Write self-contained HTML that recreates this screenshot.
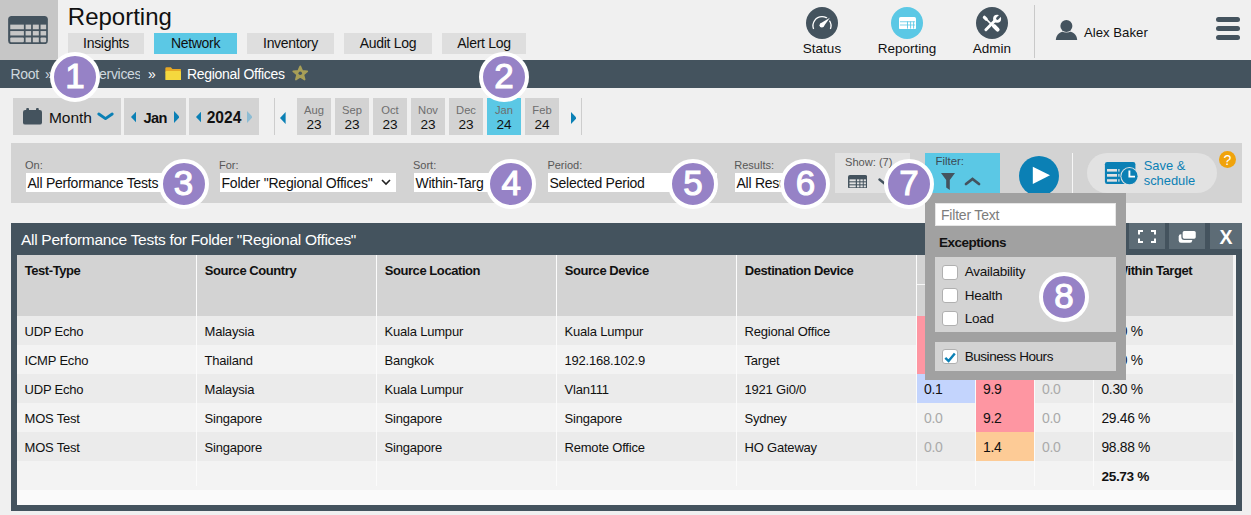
<!DOCTYPE html>
<html><head><meta charset="utf-8"><style>
*{margin:0;padding:0;box-sizing:border-box}
html,body{width:1251px;height:515px;overflow:hidden;background:#f0f0f0;position:relative;font-family:"Liberation Sans",sans-serif}
body>div,body>svg{position:absolute}
.t{white-space:nowrap;line-height:1}
.c{text-align:center}
.badge{width:50px;height:50px;border-radius:50%;background:#9682c6;border:4px solid #fff;color:#fff;font-weight:normal;-webkit-text-stroke:1.1px #fff;font-size:35px;text-align:center;line-height:40.5px}
</style></head><body>
<div style="left:0px;top:0px;width:58px;height:60px;background:#c6c6c6;"></div>
<svg style="left:8.3px;top:15.8px" width="40" height="28.2" viewBox="0 0 39.6 28.1">
<rect x="0" y="0" width="39.6" height="28.1" rx="3.5" fill="#44535e"/>
<g fill="#c6c6c6">
<rect x="2.1" y="8.6" width="13.6" height="4.6"/><rect x="2.1" y="15" width="13.6" height="4.4"/><rect x="2.1" y="21.4" width="13.6" height="4.8" rx="1"/>
<rect x="17.4" y="8.6" width="5.5" height="4.6"/><rect x="24.6" y="8.6" width="6" height="4.6"/><rect x="32.3" y="8.6" width="5.6" height="4.6"/>
<rect x="17.4" y="15" width="5.5" height="4.4"/><rect x="24.6" y="15" width="6" height="4.4"/><rect x="32.3" y="15" width="5.6" height="4.4"/>
<rect x="17.4" y="21.4" width="5.5" height="4.8"/><rect x="24.6" y="21.4" width="6" height="4.8"/><rect x="32.3" y="21.4" width="5.6" height="4.8" rx="1"/>
</g></svg>
<div class="t" style="left:67.8px;top:4.98px;font-size:24px;color:#111;font-weight:normal;">Reporting</div>
<div style="left:68px;top:33px;width:76px;height:21px;background:#dedede;"></div>
<div class="t c" style="left:68px;width:76px;top:36.15px;font-size:14px;letter-spacing:-0.3px;color:#111">Insights</div>
<div style="left:154px;top:33px;width:83px;height:21px;background:#5bc8e5;"></div>
<div class="t c" style="left:154px;width:83px;top:36.15px;font-size:14px;letter-spacing:-0.3px;color:#111">Network</div>
<div style="left:247px;top:33px;width:87px;height:21px;background:#dedede;"></div>
<div class="t c" style="left:247px;width:87px;top:36.15px;font-size:14px;letter-spacing:-0.3px;color:#111">Inventory</div>
<div style="left:344px;top:33px;width:88px;height:21px;background:#dedede;"></div>
<div class="t c" style="left:344px;width:88px;top:36.15px;font-size:14px;letter-spacing:-0.3px;color:#111">Audit Log</div>
<div style="left:442px;top:33px;width:84px;height:21px;background:#dedede;"></div>
<div class="t c" style="left:442px;width:84px;top:36.15px;font-size:14px;letter-spacing:-0.3px;color:#111">Alert Log</div>
<div style="left:806px;top:6.800000000000001px;width:32px;height:32px;border-radius:50%;background:#44535e;"></div>
<svg style="left:806px;top:6.8px" width="32" height="32" viewBox="0 0 32 32">
<path d="M7.6 21.9 A9 9 0 1 1 24.4 21.9" fill="none" stroke="#fff" stroke-width="1.3"/>
<path d="M16 18 L24.6 10.1" stroke="#44535e" stroke-width="3.6"/>
<path d="M14.3 16.6 L23.9 10.8 L17.4 19.8 Z" fill="#fff"/><circle cx="15.8" cy="18.2" r="2.3" fill="#fff"/>
</svg>
<div style="left:891px;top:6.800000000000001px;width:32px;height:32px;border-radius:50%;background:#5bc8e5;"></div>
<svg style="left:898.5px;top:16.7px" width="17" height="12.4" viewBox="0 0 17 12.4">
<rect x="0" y="0" width="17" height="12.4" rx="1.6" fill="#fff"/>
<g fill="#5bc8e5"><rect x="0.9" y="4.4" width="15.2" height="0.8"/><rect x="0.9" y="7.6" width="15.2" height="0.8"/>
<rect x="8" y="4.4" width="0.9" height="7.2"/><rect x="11.2" y="4.4" width="0.9" height="7.2"/><rect x="14.2" y="4.4" width="0.9" height="7.2"/></g>
</svg>
<div style="left:976px;top:6.800000000000001px;width:32px;height:32px;border-radius:50%;background:#44535e;"></div>
<svg style="left:976px;top:6.8px" width="32" height="32" viewBox="0 0 32 32">
<g stroke="#fff" stroke-linecap="round" fill="none">
<path d="M8.4 10.3 L10.2 12.1" stroke-width="3.2"/>
<path d="M9.5 11.4 L17.5 19.4" stroke-width="1.6"/>
<path d="M18 19 L21.6 22.6" stroke-width="4"/>
<path d="M9.9 22.7 L18.8 13.8" stroke-width="3"/>
</g>
<circle cx="21.1" cy="11.8" r="4" fill="#fff"/>
<path d="M21.4 11.5 L25.2 7.7" stroke="#44535e" stroke-width="2.6" stroke-linecap="round"/>
</svg>
<div class="t c" style="left:772px;width:100px;top:42.17px;font-size:13.5px;color:#111">Status</div>
<div class="t c" style="left:857px;width:100px;top:42.17px;font-size:13.5px;color:#111">Reporting</div>
<div class="t c" style="left:942px;width:100px;top:42.17px;font-size:13.5px;color:#111">Admin</div>
<div style="left:1034px;top:5px;width:1px;height:53px;background:#c9c9c9;"></div>
<svg style="left:1055px;top:19px" width="23" height="22" viewBox="0 0 23 22">
<path d="M0.8 21 C1.2 15.5 5 12.3 11.5 12.3 C18 12.3 21.8 15.5 22.2 21 Z" fill="#44535e"/>
<circle cx="11.4" cy="7" r="6.6" fill="#efefef"/>
<circle cx="11.4" cy="7" r="6" fill="#44535e"/>
</svg>
<div class="t" style="left:1084px;top:26.02px;font-size:13.2px;color:#111;font-weight:normal;">Alex Baker</div>
<div style="left:1216px;top:17px;width:24px;height:5.300000000000001px;background:#44535e;border-radius:3px"></div>
<div style="left:1216px;top:26px;width:24px;height:5.300000000000001px;background:#44535e;border-radius:3px"></div>
<div style="left:1216px;top:35px;width:24px;height:5.299999999999997px;background:#44535e;border-radius:3px"></div>
<div style="left:0px;top:60px;width:1251px;height:28px;background:#44535e;"></div>
<div class="t" style="left:10.5px;top:66.95px;font-size:14px;color:#cfd8de;font-weight:normal;letter-spacing:-0.3px;">Root</div>
<div class="t" style="left:45px;top:66.95px;font-size:14px;color:#cfd8de;font-weight:normal;">&raquo;</div>
<div class="t" style="left:90px;top:66.95px;font-size:14px;color:#cfd8de;font-weight:normal;letter-spacing:-0.3px;width:50px;text-align:right;overflow:hidden">Services</div>
<div class="t" style="left:148px;top:66.95px;font-size:14px;color:#fff;font-weight:normal;">&raquo;</div>
<svg style="left:164.7px;top:66.5px" width="16.6" height="13.6" viewBox="0 0 17 14">
<path d="M0.3 1.6 Q0.3 0.3 1.6 0.3 L6 0.3 L7.6 2 L15.4 2 Q16.7 2 16.7 3.3 L16.7 5 L0.3 5 Z" fill="#e6a825"/>
<rect x="0.3" y="4.2" width="16.4" height="9.5" rx="1.2" fill="#f5d83e"/>
</svg>
<div class="t" style="left:187px;top:66.95px;font-size:14px;color:#fff;font-weight:normal;letter-spacing:-0.3px;">Regional Offices</div>
<svg style="left:292px;top:65.2px" width="16.5" height="15.6" viewBox="0 0 24 23">
<path d="M12 2 L14.9 8.8 L22.3 9.4 L16.6 14.2 L18.4 21.4 L12 17.5 L5.6 21.4 L7.4 14.2 L1.7 9.4 L9.1 8.8 Z" fill="#a89f57" stroke="#a89f57" stroke-width="2.6" stroke-linejoin="round"/>
<circle cx="12" cy="12.3" r="2.6" fill="#44535e"/>
</svg>
<div style="left:13px;top:98px;width:108px;height:37px;background:#d3d3d3;"></div>
<svg style="left:23px;top:108px" width="19" height="17" viewBox="0 0 19 17">
<rect x="0" y="2" width="19" height="14.6" rx="2.2" fill="#44535e"/>
<rect x="3.2" y="0" width="2.8" height="4" rx="1" fill="#44535e"/><rect x="13" y="0" width="2.8" height="4" rx="1" fill="#44535e"/>
</svg>
<div class="t" style="left:48.9px;top:109.68px;font-size:15.5px;color:#111;font-weight:normal;">Month</div>
<svg style="left:97px;top:112px" width="17" height="9" viewBox="0 0 17 9"><path d="M1.8 2 L8.5 6.6 L15.2 2" fill="none" stroke="#0b80b5" stroke-width="2.9" stroke-linecap="round" stroke-linejoin="round"/></svg>
<div style="left:124px;top:98px;width:62px;height:37px;background:#d3d3d3;"></div>
<div style="left:189px;top:98px;width:70px;height:37px;background:#d3d3d3;"></div>
<svg style="left:130.8px;top:111px" width="5.6" height="12" viewBox="0 0 5.6 12"><path d="M5.6 0 L0 6.0 L5.6 12 Z" fill="#0b80b5"/></svg>
<div class="t" style="left:143.5px;top:110.84px;font-size:14.6px;color:#111;font-weight:bold;letter-spacing:-0.6px;">Jan</div>
<svg style="left:173.7px;top:111px" width="5.6" height="12" viewBox="0 0 5.6 12"><path d="M0 0 L5.6 6.0 L0 12 Z" fill="#0b80b5"/></svg>
<svg style="left:195.8px;top:111px" width="5.6" height="12" viewBox="0 0 5.6 12"><path d="M5.6 0 L0 6.0 L5.6 12 Z" fill="#0b80b5"/></svg>
<div class="t" style="left:206.7px;top:109.99px;font-size:15.6px;color:#111;font-weight:bold;">2024</div>
<svg style="left:246.8px;top:111px" width="5.6" height="12" viewBox="0 0 5.6 12"><path d="M0 0 L5.6 6.0 L0 12 Z" fill="#8dbcd3"/></svg>
<div style="left:274px;top:98px;width:1px;height:37px;background:#cdcdcd;"></div>
<svg style="left:280px;top:111.5px" width="5.6" height="12" viewBox="0 0 5.6 12"><path d="M5.6 0 L0 6.0 L5.6 12 Z" fill="#0b80b5"/></svg>
<div style="left:297px;top:98px;width:34px;height:37px;background:#d3d3d3;"></div>
<div class="t c" style="left:297px;width:34px;top:105.32px;font-size:11.2px;color:#6e6e6e">Aug</div>
<div class="t c" style="left:297px;width:34px;top:117.68px;font-size:13.6px;color:#111">23</div>
<div style="left:335px;top:98px;width:34px;height:37px;background:#d3d3d3;"></div>
<div class="t c" style="left:335px;width:34px;top:105.32px;font-size:11.2px;color:#6e6e6e">Sep</div>
<div class="t c" style="left:335px;width:34px;top:117.68px;font-size:13.6px;color:#111">23</div>
<div style="left:373px;top:98px;width:34px;height:37px;background:#d3d3d3;"></div>
<div class="t c" style="left:373px;width:34px;top:105.32px;font-size:11.2px;color:#6e6e6e">Oct</div>
<div class="t c" style="left:373px;width:34px;top:117.68px;font-size:13.6px;color:#111">23</div>
<div style="left:411px;top:98px;width:34px;height:37px;background:#d3d3d3;"></div>
<div class="t c" style="left:411px;width:34px;top:105.32px;font-size:11.2px;color:#6e6e6e">Nov</div>
<div class="t c" style="left:411px;width:34px;top:117.68px;font-size:13.6px;color:#111">23</div>
<div style="left:449px;top:98px;width:34px;height:37px;background:#d3d3d3;"></div>
<div class="t c" style="left:449px;width:34px;top:105.32px;font-size:11.2px;color:#6e6e6e">Dec</div>
<div class="t c" style="left:449px;width:34px;top:117.68px;font-size:13.6px;color:#111">23</div>
<div style="left:487px;top:98px;width:34px;height:37px;background:#5bc8e5;"></div>
<div class="t c" style="left:487px;width:34px;top:105.32px;font-size:11.2px;color:#6e6e6e">Jan</div>
<div class="t c" style="left:487px;width:34px;top:117.68px;font-size:13.6px;color:#111">24</div>
<div style="left:525px;top:98px;width:34px;height:37px;background:#d3d3d3;"></div>
<div class="t c" style="left:525px;width:34px;top:105.32px;font-size:11.2px;color:#6e6e6e">Feb</div>
<div class="t c" style="left:525px;width:34px;top:117.68px;font-size:13.6px;color:#111">24</div>
<svg style="left:570.6px;top:112px" width="5.6" height="12" viewBox="0 0 5.6 12"><path d="M0 0 L5.6 6.0 L0 12 Z" fill="#0b80b5"/></svg>
<div style="left:581px;top:98px;width:1px;height:37px;background:#cdcdcd;"></div>
<div style="left:11px;top:143px;width:1231px;height:60px;background:#d3d3d3;"></div>
<div class="t" style="left:25px;top:159.69px;font-size:11px;color:#575757;font-weight:normal;">On:</div>
<div class="t" style="left:219px;top:159.69px;font-size:11px;color:#575757;font-weight:normal;">For:</div>
<div class="t" style="left:413px;top:159.69px;font-size:11px;color:#575757;font-weight:normal;">Sort:</div>
<div class="t" style="left:547.4px;top:159.69px;font-size:11px;color:#575757;font-weight:normal;">Period:</div>
<div class="t" style="left:734.3px;top:159.69px;font-size:11px;color:#575757;font-weight:normal;">Results:</div>
<div style="left:26px;top:173px;width:174px;height:19px;background:#fff;"></div>
<div class="t" style="left:27.5px;top:176.15px;font-size:14px;color:#111;font-weight:normal;letter-spacing:-0.25px;">All Performance Tests</div>
<div style="left:220px;top:173px;width:176px;height:19px;background:#fff;"></div>
<div class="t" style="left:221.5px;top:176.15px;font-size:14px;color:#111;font-weight:normal;letter-spacing:-0.2px;">Folder "Regional Offices"</div>
<svg style="left:381px;top:179px" width="10" height="7" viewBox="0 0 10 7"><path d="M1 1 L5 5 L9 1" fill="none" stroke="#222" stroke-width="1.6"/></svg>
<div style="left:414px;top:173px;width:86px;height:19px;background:#fff;"></div>
<div class="t" style="left:415.5px;top:176.15px;font-size:14px;color:#111;font-weight:normal;letter-spacing:-0.25px;">Within-Targ</div>
<div style="left:548px;top:173px;width:169px;height:19px;background:#fff;"></div>
<div class="t" style="left:549.5px;top:176.15px;font-size:14px;color:#111;font-weight:normal;letter-spacing:-0.25px;">Selected Period</div>
<div style="left:735px;top:173px;width:65px;height:19px;background:#fff;"></div>
<div class="t" style="left:736.5px;top:176.15px;font-size:14px;color:#111;font-weight:normal;letter-spacing:-0.25px;">All Resu</div>
<div style="left:835px;top:153px;width:75px;height:40px;background:#e2e2e2;"></div>
<div class="t" style="left:845px;top:156.60px;font-size:11.1px;color:#575757;font-weight:normal;">Show: (7)</div>
<svg style="left:848px;top:174.6px" width="19.2" height="13.6" viewBox="0 0 39.6 28.1">
<rect x="0" y="0" width="39.6" height="28.1" rx="4" fill="#44535e"/>
<g fill="#e2e2e2">
<rect x="3" y="9" width="13" height="4"/><rect x="3" y="15.2" width="13" height="4"/><rect x="3" y="21.4" width="13" height="4"/>
<rect x="18.5" y="9" width="5" height="4"/><rect x="25.5" y="9" width="5" height="4"/><rect x="32.5" y="9" width="4.5" height="4"/>
<rect x="18.5" y="15.2" width="5" height="4"/><rect x="25.5" y="15.2" width="5" height="4"/><rect x="32.5" y="15.2" width="4.5" height="4"/>
<rect x="18.5" y="21.4" width="5" height="4"/><rect x="25.5" y="21.4" width="5" height="4"/><rect x="32.5" y="21.4" width="4.5" height="4"/>
</g></svg>
<svg style="left:878px;top:178px" width="14" height="8" viewBox="0 0 14 8"><path d="M1.5 1.5 L7 6 L12.5 1.5" fill="none" stroke="#44535e" stroke-width="2.4" stroke-linecap="round"/></svg>
<div style="left:925px;top:153px;width:75px;height:40px;background:#5bc8e5;"></div>
<div class="t" style="left:935.5px;top:156.35px;font-size:11.4px;color:#3b4a55;font-weight:normal;">Filter:</div>
<svg style="left:941px;top:173px" width="14" height="17" viewBox="0 0 14 17">
<path d="M0 0 L14 0 L8.8 7 L8.8 17 L5.2 14.5 L5.2 7 Z" fill="#44535e"/></svg>
<svg style="left:964px;top:177px" width="17" height="9" viewBox="0 0 17 9"><path d="M2 7 L8.5 2 L15 7" fill="none" stroke="#44535e" stroke-width="2.8" stroke-linecap="round"/></svg>
<div style="left:1019px;top:156px;width:40px;height:40px;border-radius:50%;background:#0b80b5;"></div>
<svg style="left:1029px;top:164px" width="22" height="24" viewBox="0 0 22 24"><path d="M3.8 2.7 L21 11.3 L3.8 20 Z" fill="#fff"/></svg>
<div style="left:1072px;top:153px;width:1.2999999999999545px;height:40px;background:#f6f6f6;"></div>
<div style="left:1087px;top:153px;width:130px;height:40px;background:#e2e2e2;border-radius:20px"></div>
<svg style="left:1104px;top:162px" width="34" height="24" viewBox="0 0 34 24">
<rect x="0.9" y="0" width="30.5" height="22" rx="2.2" fill="#0b80b5"/>
<g fill="#e2e2e2"><rect x="3" y="7" width="10" height="2.6"/><rect x="3" y="12" width="10" height="2.7"/><rect x="3" y="17.2" width="10" height="2.5"/>
<rect x="14.3" y="7" width="1.2" height="2.6"/><rect x="14.3" y="12" width="1.2" height="2.7"/><rect x="14.3" y="17.2" width="1.2" height="2.5"/></g>
<circle cx="25.5" cy="14.2" r="9.1" fill="#e2e2e2"/><circle cx="25.5" cy="14.2" r="8.1" fill="#0b80b5"/>
<path d="M25.4 8.6 L25.4 14.6 L31 14.6" fill="none" stroke="#fff" stroke-width="1.9"/>
</svg>
<div class="t" style="left:1143.7px;top:159.58px;font-size:12.9px;color:#0b80b5;font-weight:normal;">Save &amp;</div>
<div class="t" style="left:1143.7px;top:174.58px;font-size:12.9px;color:#0b80b5;font-weight:normal;">schedule</div>
<div style="left:1219.0px;top:150.9px;width:17.0px;height:17.0px;border-radius:50%;background:#f0a30c;"></div>
<div class="t c" style="left:1219px;width:17px;top:152.65px;font-size:14px;color:#fff">?</div>
<div style="left:11px;top:223px;width:1231px;height:288px;background:#44535e;"></div>
<div class="t" style="left:21px;top:231.88px;font-size:15.5px;color:#fff;font-weight:normal;letter-spacing:-0.29px;">All Performance Tests for Folder "Regional Offices"</div>
<div style="left:1129px;top:223px;width:36px;height:26px;background:#5d6c76;"></div>
<div style="left:1169px;top:223px;width:36px;height:26px;background:#5d6c76;"></div>
<div style="left:1210px;top:223px;width:32px;height:26px;background:#5d6c76;"></div>
<svg style="left:1138px;top:230px" width="18" height="13" viewBox="0 0 18 13"><path d="M1 4.5 L1 1 L5 1 M13 1 L17 1 L17 4.5 M17 8.5 L17 12 L13 12 M5 12 L1 12 L1 8.5" fill="none" stroke="#fff" stroke-width="2"/></svg>
<svg style="left:1178px;top:229.5px" width="19" height="13" viewBox="0 0 19 13"><rect x="0.7" y="4.2" width="13.5" height="8.6" rx="2.2" fill="#fff"/><rect x="4" y="0.3" width="14.4" height="9" rx="2.2" fill="#fff" stroke="#5d6c76" stroke-width="1.3"/></svg>
<div class="t c" style="left:1210px;width:32px;top:228.49px;font-size:19.5px;font-weight:bold;color:#fff">X</div>
<div style="left:17px;top:255px;width:1219px;height:250px;background:#fafafa;"></div>
<div style="left:17px;top:255px;width:1216px;height:61px;background:#d3d3d3;"></div>
<div style="left:1233px;top:255px;width:3px;height:61px;background:#f4f4f4;"></div>
<div style="left:17px;top:316px;width:1216px;height:29px;background:#ebebeb;"></div>
<div style="left:1233px;top:316px;width:3px;height:29px;background:#f4f4f4;"></div>
<div style="left:17px;top:345px;width:1216px;height:29px;background:#f3f3f3;"></div>
<div style="left:1233px;top:345px;width:3px;height:29px;background:#f4f4f4;"></div>
<div style="left:17px;top:374px;width:1216px;height:29px;background:#ebebeb;"></div>
<div style="left:1233px;top:374px;width:3px;height:29px;background:#f4f4f4;"></div>
<div style="left:17px;top:403px;width:1216px;height:29px;background:#f3f3f3;"></div>
<div style="left:1233px;top:403px;width:3px;height:29px;background:#f4f4f4;"></div>
<div style="left:17px;top:432px;width:1216px;height:29px;background:#ebebeb;"></div>
<div style="left:1233px;top:432px;width:3px;height:29px;background:#f4f4f4;"></div>
<div style="left:17px;top:461px;width:1216px;height:29px;background:#f3f3f3;"></div>
<div style="left:1233px;top:461px;width:3px;height:29px;background:#f4f4f4;"></div>
<div style="left:196px;top:255px;width:1px;height:231px;background:#fbfbfb;"></div>
<div style="left:376px;top:255px;width:1px;height:231px;background:#fbfbfb;"></div>
<div style="left:556px;top:255px;width:1px;height:231px;background:#fbfbfb;"></div>
<div style="left:736px;top:255px;width:1px;height:231px;background:#fbfbfb;"></div>
<div style="left:916px;top:255px;width:1px;height:231px;background:#fbfbfb;"></div>
<div style="left:975px;top:255px;width:1px;height:231px;background:#fbfbfb;"></div>
<div style="left:1034px;top:255px;width:1px;height:231px;background:#fbfbfb;"></div>
<div style="left:1093px;top:255px;width:1px;height:231px;background:#fbfbfb;"></div>
<div class="t" style="left:24.7px;top:263.99px;font-size:13px;color:#111;font-weight:bold;letter-spacing:-0.43px;">Test-Type</div>
<div class="t" style="left:204.7px;top:263.99px;font-size:13px;color:#111;font-weight:bold;letter-spacing:-0.43px;">Source Country</div>
<div class="t" style="left:384.7px;top:263.99px;font-size:13px;color:#111;font-weight:bold;letter-spacing:-0.43px;">Source Location</div>
<div class="t" style="left:564.7px;top:263.99px;font-size:13px;color:#111;font-weight:bold;letter-spacing:-0.43px;">Source Device</div>
<div class="t" style="left:744.7px;top:263.99px;font-size:13px;color:#111;font-weight:bold;letter-spacing:-0.43px;">Destination Device</div>
<div class="t" style="left:1101.5px;top:263.99px;font-size:13px;color:#111;font-weight:bold;letter-spacing:-0.43px;">% Within Target</div>
<div style="left:917px;top:284px;width:177px;height:1px;background:#f6f6f6;"></div>
<div class="t" style="left:24.5px;top:325.19px;font-size:13px;color:#111;font-weight:normal;letter-spacing:-0.2px;">UDP Echo</div>
<div class="t" style="left:204.5px;top:325.19px;font-size:13px;color:#111;font-weight:normal;letter-spacing:-0.2px;">Malaysia</div>
<div class="t" style="left:384.5px;top:325.19px;font-size:13px;color:#111;font-weight:normal;letter-spacing:-0.2px;">Kuala Lumpur</div>
<div class="t" style="left:564.5px;top:325.19px;font-size:13px;color:#111;font-weight:normal;letter-spacing:-0.2px;">Kuala Lumpur</div>
<div class="t" style="left:744.5px;top:325.19px;font-size:13px;color:#111;font-weight:normal;letter-spacing:-0.2px;">Regional Office</div>
<div style="left:917px;top:316px;width:58px;height:29px;background:#fe96a2;"></div>
<div style="left:976px;top:316px;width:58px;height:29px;background:#fe96a2;"></div>
<div class="t" style="left:1101.5px;top:324.52px;font-size:13.8px;color:#111;font-weight:normal;letter-spacing:-0.3px;">0.00 %</div>
<div class="t" style="left:24.5px;top:354.19px;font-size:13px;color:#111;font-weight:normal;letter-spacing:-0.2px;">ICMP Echo</div>
<div class="t" style="left:204.5px;top:354.19px;font-size:13px;color:#111;font-weight:normal;letter-spacing:-0.2px;">Thailand</div>
<div class="t" style="left:384.5px;top:354.19px;font-size:13px;color:#111;font-weight:normal;letter-spacing:-0.2px;">Bangkok</div>
<div class="t" style="left:564.5px;top:354.19px;font-size:13px;color:#111;font-weight:normal;letter-spacing:-0.2px;">192.168.102.9</div>
<div class="t" style="left:744.5px;top:354.19px;font-size:13px;color:#111;font-weight:normal;letter-spacing:-0.2px;">Target</div>
<div style="left:917px;top:345px;width:58px;height:29px;background:#fe96a2;"></div>
<div style="left:976px;top:345px;width:58px;height:29px;background:#fe96a2;"></div>
<div class="t" style="left:1101.5px;top:353.52px;font-size:13.8px;color:#111;font-weight:normal;letter-spacing:-0.3px;">0.00 %</div>
<div class="t" style="left:24.5px;top:383.19px;font-size:13px;color:#111;font-weight:normal;letter-spacing:-0.2px;">UDP Echo</div>
<div class="t" style="left:204.5px;top:383.19px;font-size:13px;color:#111;font-weight:normal;letter-spacing:-0.2px;">Malaysia</div>
<div class="t" style="left:384.5px;top:383.19px;font-size:13px;color:#111;font-weight:normal;letter-spacing:-0.2px;">Kuala Lumpur</div>
<div class="t" style="left:564.5px;top:383.19px;font-size:13px;color:#111;font-weight:normal;letter-spacing:-0.2px;">Vlan111</div>
<div class="t" style="left:744.5px;top:383.19px;font-size:13px;color:#111;font-weight:normal;letter-spacing:-0.2px;">1921 Gi0/0</div>
<div style="left:917px;top:374px;width:58px;height:29px;background:#c3d4fd;"></div>
<div class="t" style="left:924px;top:382.35px;font-size:14px;color:#111;font-weight:normal;letter-spacing:-0.3px;">0.1</div>
<div style="left:976px;top:374px;width:58px;height:29px;background:#fe96a2;"></div>
<div class="t" style="left:983px;top:382.35px;font-size:14px;color:#111;font-weight:normal;letter-spacing:-0.3px;">9.9</div>
<div class="t" style="left:1042px;top:382.35px;font-size:14px;color:#aaa;font-weight:normal;letter-spacing:-0.3px;">0.0</div>
<div class="t" style="left:1101.5px;top:382.52px;font-size:13.8px;color:#111;font-weight:normal;letter-spacing:-0.3px;">0.30 %</div>
<div class="t" style="left:24.5px;top:412.19px;font-size:13px;color:#111;font-weight:normal;letter-spacing:-0.2px;">MOS Test</div>
<div class="t" style="left:204.5px;top:412.19px;font-size:13px;color:#111;font-weight:normal;letter-spacing:-0.2px;">Singapore</div>
<div class="t" style="left:384.5px;top:412.19px;font-size:13px;color:#111;font-weight:normal;letter-spacing:-0.2px;">Singapore</div>
<div class="t" style="left:564.5px;top:412.19px;font-size:13px;color:#111;font-weight:normal;letter-spacing:-0.2px;">Singapore</div>
<div class="t" style="left:744.5px;top:412.19px;font-size:13px;color:#111;font-weight:normal;letter-spacing:-0.2px;">Sydney</div>
<div class="t" style="left:924px;top:411.35px;font-size:14px;color:#aaa;font-weight:normal;letter-spacing:-0.3px;">0.0</div>
<div style="left:976px;top:403px;width:58px;height:29px;background:#fe96a2;"></div>
<div class="t" style="left:983px;top:411.35px;font-size:14px;color:#111;font-weight:normal;letter-spacing:-0.3px;">9.2</div>
<div class="t" style="left:1042px;top:411.35px;font-size:14px;color:#aaa;font-weight:normal;letter-spacing:-0.3px;">0.0</div>
<div class="t" style="left:1101.5px;top:411.52px;font-size:13.8px;color:#111;font-weight:normal;letter-spacing:-0.3px;">29.46 %</div>
<div class="t" style="left:24.5px;top:441.19px;font-size:13px;color:#111;font-weight:normal;letter-spacing:-0.2px;">MOS Test</div>
<div class="t" style="left:204.5px;top:441.19px;font-size:13px;color:#111;font-weight:normal;letter-spacing:-0.2px;">Singapore</div>
<div class="t" style="left:384.5px;top:441.19px;font-size:13px;color:#111;font-weight:normal;letter-spacing:-0.2px;">Singapore</div>
<div class="t" style="left:564.5px;top:441.19px;font-size:13px;color:#111;font-weight:normal;letter-spacing:-0.2px;">Remote Office</div>
<div class="t" style="left:744.5px;top:441.19px;font-size:13px;color:#111;font-weight:normal;letter-spacing:-0.2px;">HO Gateway</div>
<div class="t" style="left:924px;top:440.35px;font-size:14px;color:#aaa;font-weight:normal;letter-spacing:-0.3px;">0.0</div>
<div style="left:976px;top:432px;width:58px;height:29px;background:#fdcb96;"></div>
<div class="t" style="left:983px;top:440.35px;font-size:14px;color:#111;font-weight:normal;letter-spacing:-0.3px;">1.4</div>
<div class="t" style="left:1042px;top:440.35px;font-size:14px;color:#aaa;font-weight:normal;letter-spacing:-0.3px;">0.0</div>
<div class="t" style="left:1101.5px;top:440.52px;font-size:13.8px;color:#111;font-weight:normal;letter-spacing:-0.3px;">98.88 %</div>
<div class="t" style="left:1101.5px;top:469.68px;font-size:13.6px;color:#111;font-weight:bold;letter-spacing:-0.35px;">25.73 %</div>
<div style="left:925px;top:193px;width:201px;height:187px;background:#a1a1a1;"></div>
<div style="left:935px;top:203px;width:181px;height:23px;background:#fff;border:1px solid #e6e6e6"></div>
<div class="t" style="left:941px;top:207.75px;font-size:14px;color:#7c7c7c;font-weight:normal;letter-spacing:-0.2px;">Filter Text</div>
<div class="t" style="left:939px;top:235.57px;font-size:13.5px;color:#111;font-weight:bold;letter-spacing:-0.5px;">Exceptions</div>
<div style="left:935px;top:257px;width:181px;height:75px;background:#d3d3d3;"></div>
<div style="left:935px;top:342px;width:181px;height:29px;background:#d3d3d3;"></div>
<div style="left:942px;top:264.5px;width:15.5px;height:15px;border-radius:3px;background:#fff;border:1px solid #b0b0b0"></div>
<div class="t" style="left:964.7px;top:265.37px;font-size:13.5px;color:#111;font-weight:normal;letter-spacing:-0.25px;">Availability</div>
<div style="left:942px;top:288px;width:15.5px;height:15px;border-radius:3px;background:#fff;border:1px solid #b0b0b0"></div>
<div class="t" style="left:964.7px;top:288.87px;font-size:13.5px;color:#111;font-weight:normal;letter-spacing:-0.25px;">Health</div>
<div style="left:942px;top:311px;width:15.5px;height:15px;border-radius:3px;background:#fff;border:1px solid #b0b0b0"></div>
<div class="t" style="left:964.7px;top:311.87px;font-size:13.5px;color:#111;font-weight:normal;letter-spacing:-0.25px;">Load</div>
<div style="left:942px;top:349px;width:15.5px;height:15px;border-radius:3px;background:#fff;border:1px solid #b0b0b0"></div>
<svg style="left:944px;top:351.5px" width="12" height="11" viewBox="0 0 12 11"><path d="M1.3 5.8 L4.6 9 L10.8 1.5" fill="none" stroke="#0b80b5" stroke-width="2.4"/></svg>
<div class="t" style="left:964.7px;top:349.87px;font-size:13.5px;color:#111;font-weight:normal;letter-spacing:-0.45px;">Business Hours</div>
<div class="badge" style="left:50.00px;top:52.00px">1</div>
<div class="badge" style="left:479.00px;top:52.00px">2</div>
<div class="badge" style="left:158.60px;top:158.60px">3</div>
<div class="badge" style="left:486.30px;top:158.50px">4</div>
<div class="badge" style="left:668.00px;top:158.50px">5</div>
<div class="badge" style="left:780.40px;top:159.00px">6</div>
<div class="badge" style="left:883.90px;top:159.00px">7</div>
<div class="badge" style="left:1039.00px;top:272.00px">8</div>
</body></html>
